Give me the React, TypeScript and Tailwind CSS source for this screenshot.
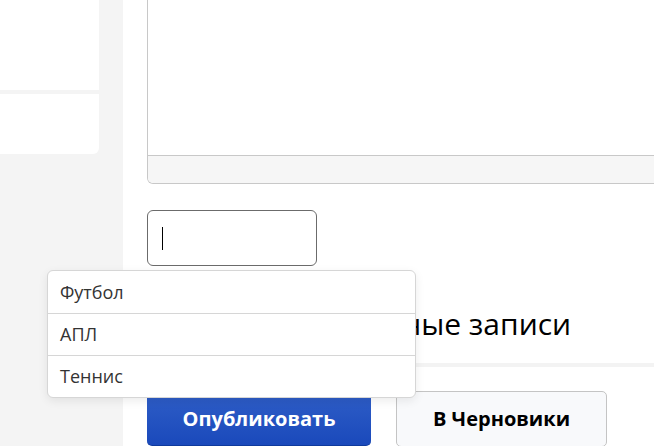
import React from 'react'

const tags = ['Футбол', 'АПЛ', 'Теннис']

function Sidebar() {
  return (
    <div className="w-[123px] shrink-0 bg-[#f4f4f4]">
      <div className="w-[99px] h-[90px] bg-white" />
      <div className="w-[99px] h-[60px] mt-[4px] bg-white rounded-br-[6px]" />
    </div>
  )
}

function Editor() {
  return (
    <div className="w-[530px] h-[184px] border border-t-0 border-[#c8c8c8] rounded-bl-[6px] flex flex-col overflow-hidden">
      <div className="h-[156px] bg-white border-b border-[#c8c8c8]" />
      <div className="flex-1 bg-[#f6f6f6]" />
    </div>
  )
}

function TagDropdown() {
  return (
    <div className="absolute left-[47px] top-[270px] w-[369px] bg-white border border-[#d6d6d6] rounded-[6px] shadow-[0_3px_10px_rgba(0,0,0,0.08)] overflow-hidden">
      {tags.map((t, i) => (
        <div
          key={t}
          className={`h-[42px] flex items-center pl-[12px] text-[18px] text-[#333] ${i > 0 ? 'border-t border-[#d6d6d6]' : ''}`}
        >
          {t}
        </div>
      ))}
    </div>
  )
}

export default function App() {
  return (
    <div className="relative w-[654px] h-[446px] overflow-hidden flex bg-white font-['Open_Sans',sans-serif]">
      <Sidebar />
      <div className="flex-1 min-w-0 pl-6 overflow-hidden">
        <Editor />
        <div className="mt-[26px] w-[170px] h-[56px] border border-[#6b6b6b] rounded-[6px] flex items-center pl-[14px]">
          <span className="w-px h-[23px] bg-black" />
        </div>
        <div className="mt-[40px] pl-[14px] h-[36px] leading-[36px] text-[30px] text-black whitespace-nowrap">
          Показать связанные записи
        </div>
        <div className="mt-[21px] h-[4px] bg-[#f3f3f3]" />
        <div className="mt-[24px] flex items-start gap-[25px]">
          <button className="mt-px w-[224px] h-[54px] rounded-[5px] bg-gradient-to-b from-[#2f5ec7] to-[#1a49bb] border-b border-[#0f3a9c] text-white text-[20px] font-bold">
            Опубликовать
          </button>
          <button className="w-[211px] h-[56px] rounded-[5px] bg-[#f8f9fb] border border-[#c4c4c4] text-black text-[20px] font-bold">
            В Черновики
          </button>
        </div>
      </div>
      <TagDropdown />
    </div>
  )
}
